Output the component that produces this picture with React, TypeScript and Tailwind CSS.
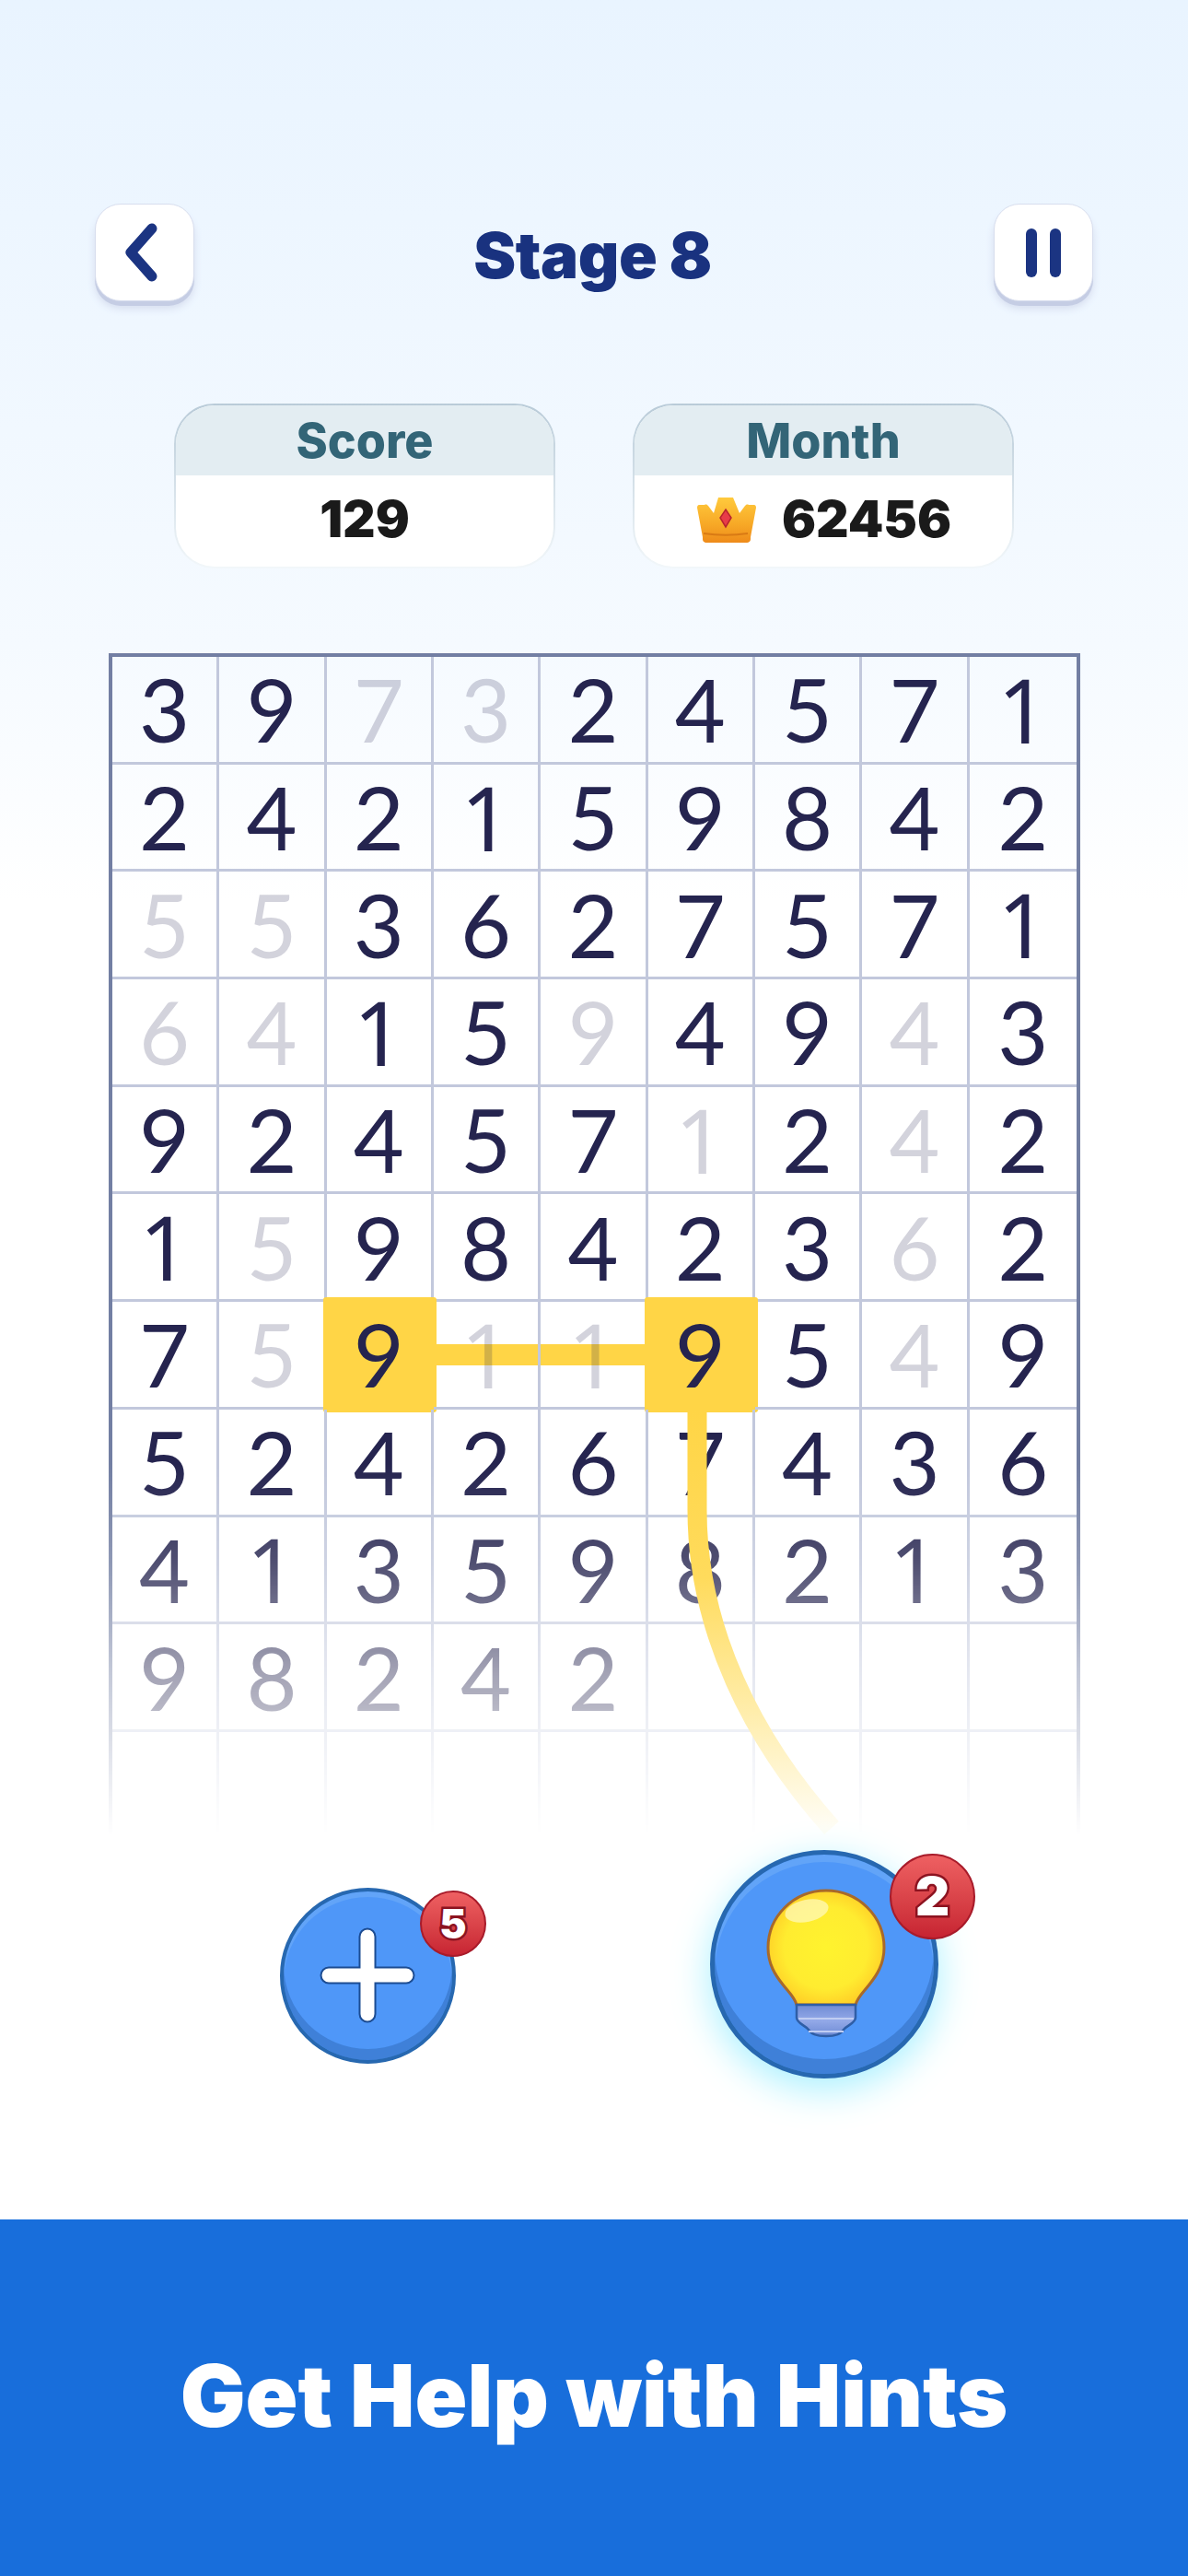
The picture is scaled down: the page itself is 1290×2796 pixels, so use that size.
const rows: string[] = [
  "3 9 7d 3d 2 4 5 7 1",
  "2 4 2 1 5 9 8 4 2",
  "5d 5d 3 6 2 7 5 7 1",
  "6d 4d 1 5 9d 4 9 4d 3",
  "9 2 4 5 7 1d 2 4d 2",
  "1 5d 9 8 4 2 3 6d 2",
  "7 5d 9h 1d 1d 9h 5 4d 9",
  "5 2 4 2 6 7 4 3 6",
  "4 1 3 5 9 8 2 1 3",
  "9 8 2 4 2 _ _ _ _",
  "_ _ _ _ _ _ _ _ _",
];

function Cell({ v, r, c }: { v: string; r: number; c: number }) {
  const digit = v[0] === "_" ? "" : v[0];
  const dim = v[1] === "d";
  const hi = v[1] === "h";
  return (
    <div
      className={`relative flex h-[116.7px] items-center justify-center ${c < 8 ? "border-r-[3px] border-[#c2c8dc]" : "border-[#c2c8dc]"} ${r < 10 ? "border-b-[3px]" : ""}`}
    >
      {hi && <div className="absolute -left-[4px] -top-[5px] h-[125px] w-[123px] rounded-[3px] bg-[#ffd546]" />}
      <span
        className={`relative z-10 leading-none text-[#25244f] ${digit === "1" ? "text-[96px] [font-family:'Noto_Sans',sans-serif]" : "text-[95px]"} ${dim ? "opacity-20" : ""}`}
      >
        {digit}
      </span>
    </div>
  );
}

function Crown() {
  return (
    <svg width="66" height="52" viewBox="0 0 66 52">
      <defs>
        <linearGradient id="cr" x1="0" y1="0" x2="0" y2="1">
          <stop offset="0" stopColor="#ffca3d" />
          <stop offset="0.6" stopColor="#f7a826" />
          <stop offset="1" stopColor="#ee8b1a" />
        </linearGradient>
      </defs>
      <path d="M25 2h16l7 17 6-8c1-1 2-2 4-1l6 0c1 0 2 1 2 3l-6 32v2c0 2-1 4-5 4H13c-4 0-5-2-5-4v-2L2 13c0-2 1-3 2-3l6 0c2-1 3 0 4 1l6 8z" fill="url(#cr)" />
      <path d="M9 41c14 2 34 2 48 0" fill="none" stroke="#d97a14" strokeWidth="2" />
      <path d="M33 15l6 9-6 10-6-10z" fill="#e83c48" stroke="#b8242e" strokeWidth="1.5" />
    </svg>
  );
}

function Bulb() {
  return (
    <svg width="130" height="163" viewBox="0 0 130 163">
      <defs>
        <radialGradient id="gl" cx="0.5" cy="0.5" r="0.6">
          <stop offset="0" stopColor="#fff32e" />
          <stop offset="0.6" stopColor="#ffec30" />
          <stop offset="1" stopColor="#ffc323" />
        </radialGradient>
        <linearGradient id="bs" x1="0" y1="0" x2="0" y2="1">
          <stop offset="0" stopColor="#6f8bd4" />
          <stop offset="0.5" stopColor="#93a9e8" />
          <stop offset="1" stopColor="#6f8bd4" />
        </linearGradient>
      </defs>
      <path d="M65 2C30 2 2 30 2 64c0 18 8 30 16 40 7 9 13 14 15 22h64c2-8 8-13 15-22 8-10 16-22 16-40C128 30 100 2 65 2z" fill="url(#gl)" stroke="#a8692a" strokeWidth="3" />
      <ellipse cx="44" cy="24" rx="24" ry="12" transform="rotate(-12 44 24)" fill="#fff8b0" opacity="0.8" />
      <path d="M33 126h64v14c0 6-9 8-13 13-2 4-6 7-19 7s-17-3-19-7c-4-5-13-7-13-13z" fill="url(#bs)" stroke="#2f5ea6" strokeWidth="2.5" />
      <path d="M35 141h60M46 155h38" stroke="#c0cdf2" strokeWidth="2" />
    </svg>
  );
}

function Badge({ n, small }: { n: string; small?: boolean }) {
  return (
    <div
      className={`absolute flex items-center justify-center rounded-full border-2 border-[#a81b2a] bg-gradient-to-b from-[#ee6062] to-[#c72332] font-black text-white [font-family:Inter,sans-serif] [paint-order:stroke_fill] ${small ? "-right-[37px] top-[-1px] h-[72px] w-[72px] text-[44px] [-webkit-text-stroke:5px_#8c1320]" : "-right-[45px] top-[-1px] h-[93px] w-[93px] text-[58px] [-webkit-text-stroke:5px_#8c1320]"}`}
    >
      {n}
    </div>
  );
}

export default function App() {
  return (
    <div className="flex h-[2796px] w-[1290px] flex-col overflow-hidden bg-gradient-to-b from-[#e9f4ff] via-[#f5faff] via-25% to-white to-35% [font-family:Lato,sans-serif]">
      <div className="mt-[221px] flex items-start justify-between px-[103px]">
        <button className="flex h-[106px] w-[108px] items-center justify-center rounded-[28px] border border-[#d8deee] bg-white shadow-[0_5px_0_#c5cde4,0_8px_8px_#d5dcee]">
          <svg width="60" height="70" viewBox="0 0 60 70">
            <path d="M38 9 15 35l23 26" fill="none" stroke="#1b3482" strokeWidth="11" strokeLinecap="round" strokeLinejoin="round" />
          </svg>
        </button>
        <h1 className="mr-[3px] mt-[22px] text-[69px] font-black leading-[68px] tracking-[-0.5px] text-[#19327f] [font-family:Inter,sans-serif]">Stage 8</h1>
        <button className="flex h-[106px] w-[108px] items-center justify-center gap-[14px] rounded-[28px] border border-[#d8deee] bg-white shadow-[0_5px_0_#c5cde4,0_8px_8px_#d5dcee]">
          <span className="h-[53px] w-[12px] rounded-full bg-[#1b3482]" />
          <span className="h-[53px] w-[12px] rounded-full bg-[#1b3482]" />
        </button>
      </div>

      <div className="ml-[189px] mt-[111px] flex gap-[84px] [font-family:Inter,sans-serif]">
        {[
          { t: "Score", v: "129" },
          { t: "Month", v: "62456", crown: true },
        ].map((s) => (
          <div key={s.t} className="h-[179px] w-[414px] overflow-hidden rounded-[44px] bg-gradient-to-b from-[#b9cbd8] to-[#f2f7fa] p-[2px]">
            <div className="h-full overflow-hidden rounded-[42px] bg-white">
              <div className="flex h-[76px] items-center justify-center bg-[#e3edf2] pt-[2px] text-[52px] font-extrabold text-[#336577]">{s.t}</div>
              <div className="flex h-[99px] items-center justify-center gap-[28px] pb-[4px] text-[55px] font-black text-[#1a1a1a]">
                {s.crown && <Crown />}
                <span>{s.v}</span>
              </div>
            </div>
          </div>
        ))}
      </div>

      <div className="relative ml-[118px] mt-[92px] h-[1290px] w-[1055px]">
        <div className="h-full [mask-image:linear-gradient(to_bottom,black_880px,rgba(0,0,0,0.8)_988px,rgba(0,0,0,0.42)_1108px,transparent_1283px)]">
          <div className="border-x-[4px] border-t-[4px] border-[#737fa3]">
            <div className="absolute left-[355px] top-[750px] h-[23px] w-[340px] bg-[#ffd546]" />
            <div className="grid grid-cols-9">
              {rows.map((row, r) => row.split(" ").map((v, c) => <Cell key={`${r}-${c}`} v={v} r={r} c={c} />))}
            </div>
          </div>
        </div>
        <svg className="absolute left-0 top-0 z-20" width="1055" height="1290" viewBox="0 0 1055 1290">
          <defs>
            <linearGradient id="tr" gradientUnits="userSpaceOnUse" x1="0" y1="823" x2="0" y2="1275">
              <stop offset="0" stopColor="#ffd546" />
              <stop offset="0.4" stopColor="#ffdb5c" />
              <stop offset="0.7" stopColor="#ffeca6" />
              <stop offset="1" stopColor="#fffdf5" />
            </linearGradient>
          </defs>
          <path d="M639 823 V930 C639 1060 700 1180 785 1275" fill="none" stroke="url(#tr)" strokeWidth="21" />
        </svg>
      </div>

      <div className="relative z-30 -mt-[3px] flex h-[250px] pl-[304px] pt-[12px]">
        <div className="relative mt-[41px] h-[191px] w-[191px] rounded-full border-[4px] border-[#2768b0] bg-[#4f97f8] shadow-[inset_0_-12px_0_#3f80d8,inset_0_6px_0_#62a4f8]">
          <svg className="absolute left-[38px] top-[38px]" width="106" height="106" viewBox="0 0 106 106">
            <path d="M53 11V95M11 53H95" stroke="#1c4c92" strokeWidth="19" strokeLinecap="round" />
            <path d="M53 11V95M11 53H95" stroke="#fff" strokeWidth="15" strokeLinecap="round" />
          </svg>
          <Badge n="5" small />
        </div>
        <div className="relative ml-[276px] h-[248px] w-[248px] rounded-full border-[5px] border-[#2768b0] bg-[#4f97f8] shadow-[inset_0_-16px_0_#3f80d8,inset_0_8px_0_#62a4f8,0_12px_42px_#a8f0ff]">
          <div className="absolute left-[56px] top-[37px]">
            <Bulb />
          </div>
          <Badge n="2" />
        </div>
      </div>

      <div className="mt-auto flex h-[387px] items-center justify-center bg-[#186edb] pb-[5px] text-[94px] font-black text-white [font-family:Inter,sans-serif]">
        Get Help with Hints
      </div>
    </div>
  );
}
